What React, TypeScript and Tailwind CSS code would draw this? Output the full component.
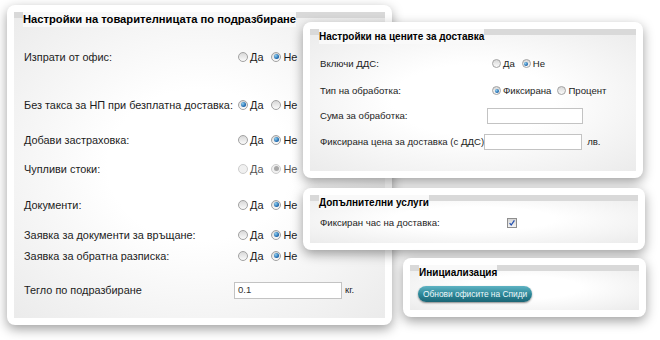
import type React from "react";

const FONT = "font-[family-name:'Liberation_Sans',Arial,sans-serif]";

type RadioProps = { checked?: boolean; disabled?: boolean; small?: boolean };

const Radio: React.FC<RadioProps> = ({ checked, disabled, small }) => (
  <span
    className={`inline-flex shrink-0 items-center justify-center rounded-full border ${
      small ? "h-[9px] w-[9px]" : "h-[10px] w-[10px]"
    } ${
      disabled
        ? "border-[#cdcdcd] bg-[#f0f0f0]"
        : "border-[#a2a2a2] bg-[linear-gradient(#d8d8d8,#fbfbfb)]"
    }`}
  >
    {checked && (
      <span
        className={`rounded-full ${small ? "h-[4px] w-[4px]" : "h-[5px] w-[5px]"} ${
          disabled
            ? "bg-[#a8a8a8]"
            : "bg-[radial-gradient(circle_at_35%_35%,#8fd0f0,#1660a8_70%)]"
        }`}
      />
    )}
  </span>
);

type ChoiceProps = { label: string; checked?: boolean; disabled?: boolean; small?: boolean };

const Choice: React.FC<ChoiceProps> = ({ label, checked, disabled, small }) => (
  <span className="inline-flex items-center gap-[2px]">
    <Radio checked={checked} disabled={disabled} small={small} />
    <span className={disabled ? "text-[#555]" : ""}>{label}</span>
  </span>
);

const Panel: React.FC<{ title: string; titleSize: string; className: string; children: React.ReactNode }> = ({
  title,
  titleSize,
  className,
  children,
}) => (
  <div className={`absolute rounded-[8px] bg-white p-[7px] shadow-[0_4px_12px_rgba(0,0,0,0.38)] ${className}`}>
    <div className="h-full bg-[radial-gradient(ellipse_at_center,#ffffff_35%,#ebebeb_100%)]">
      <div className="flex h-[15px] border-t-[6px] border-[#d9d9d9] pl-[9px]">
        <span
          className={`-mt-[6px] inline-block h-[15px] bg-[#f9f9f9] font-bold leading-[15px] text-black ${titleSize}`}
        >
          {title}
        </span>
      </div>
      {children}
    </div>
  </div>
);

const LeftRow: React.FC<{ label: string; className: string; children: React.ReactNode }> = ({
  label,
  className,
  children,
}) => (
  <div className={`flex h-[20px] items-center pl-[10px] ${className}`}>
    <span className="w-[210px] shrink-0">{label}</span>
    {children}
  </div>
);

const YesNo: React.FC<{ yes?: boolean; disabled?: boolean }> = ({ yes, disabled }) => (
  <div className="flex items-center gap-[8px] pl-[4px]">
    <Choice label="Да" checked={yes} disabled={disabled} />
    <Choice label="Не" checked={!yes} disabled={disabled} />
  </div>
);

const RightRow: React.FC<{ label: string; className: string; children: React.ReactNode }> = ({
  label,
  className,
  children,
}) => (
  <div className={`flex h-[20px] items-center pl-[10px] ${className}`}>
    <span className="w-[164px] shrink-0 whitespace-nowrap">{label}</span>
    {children}
  </div>
);

export default function App() {
  return (
    <div className={`relative h-[340px] w-[660px] overflow-hidden bg-white text-[#1c1c1c] ${FONT}`}>
      <Panel
        title="Настройки на товарителницата по подразбиране"
        titleSize="text-[11.2px]"
        className="left-[7px] top-[5px] h-[320px] w-[385px] text-[10.9px]"
      >
        <LeftRow label="Изпрати от офис:" className="mt-[20px]">
          <YesNo />
        </LeftRow>
        <LeftRow label="Без такса за НП при безплатна доставка:" className="mt-[28px]">
          <YesNo yes />
        </LeftRow>
        <LeftRow label="Добави застраховка:" className="mt-[15px]">
          <YesNo />
        </LeftRow>
        <LeftRow label="Чупливи стоки:" className="mt-[9px]">
          <YesNo disabled />
        </LeftRow>
        <LeftRow label="Документи:" className="mt-[16px]">
          <YesNo />
        </LeftRow>
        <LeftRow label="Заявка за документи за връщане:" className="mt-[10px]">
          <YesNo />
        </LeftRow>
        <LeftRow label="Заявка за обратна разписка:" className="mt-[1px]">
          <YesNo />
        </LeftRow>
        <LeftRow label="Тегло по подразбиране" className="mt-[14px]">
          <div className="flex h-[17px] w-[108px] items-center border border-[#c3c3c3] bg-white px-[3px] text-[9.5px] text-[#333]">
            0.1
          </div>
          <span className="ml-[3px] text-[9.5px]">кг.</span>
        </LeftRow>
      </Panel>

      <Panel
        title="Настройки на цените за доставка"
        titleSize="text-[10px]"
        className="left-[303px] top-[22px] h-[156px] w-[340px] text-[9.6px]"
      >
        <RightRow label="Включи ДДС:" className="mt-[10px]">
          <div className="flex items-center gap-[7px] pl-[8px]">
            <Choice small label="Да" />
            <Choice small checked label="Не" />
          </div>
        </RightRow>
        <RightRow label="Тип на обработка:" className="mt-[7px]">
          <div className="flex items-center gap-[6px] pl-[8px]">
            <Choice small checked label="Фиксирана" />
            <Choice small label="Процент" />
          </div>
        </RightRow>
        <RightRow label="Сума за обработка:" className="mt-[5px]">
          <div className="ml-[3px] h-[16px] w-[96px] border border-[#c3c3c3] bg-white" />
        </RightRow>
        <div className="mt-[6px] flex h-[20px] items-center pl-[10px]">
          <span className="whitespace-nowrap">Фиксирана цена за доставка (с ДДС)</span>
          <div className="h-[16px] w-[98px] shrink-0 border border-[#c3c3c3] bg-white" />
          <span className="ml-[5px]">лв.</span>
        </div>
      </Panel>

      <Panel
        title="Допълнителни услуги"
        titleSize="text-[10px]"
        className="left-[303px] top-[188px] h-[62px] w-[342px] text-[9.6px]"
      >
        <div className="mt-[3px] flex h-[20px] items-center pl-[10px]">
          <span className="w-[187px] shrink-0">Фиксиран час на доставка:</span>
          <span className="flex h-[10px] w-[10px] items-center justify-center border border-[#8e8e8e] bg-[linear-gradient(#d4d4d4,#f4f4f4)]">
            <svg viewBox="0 0 10 10" className="h-[8px] w-[8px]">
              <path d="M2 5.2 L4 7.5 L8 1.8" fill="none" stroke="#2450b0" strokeWidth="1.6" />
            </svg>
          </span>
        </div>
      </Panel>

      <Panel
        title="Инициализация"
        titleSize="text-[10px]"
        className="left-[403px] top-[258px] h-[59px] w-[243px] text-[10px]"
      >
        <div className="mt-[6px] pl-[8px]">
          <button
            type="button"
            className="h-[16px] rounded-full bg-[linear-gradient(#5fb3c3,#2a8596_55%,#1c6676)] px-[5px] text-[8.4px] leading-[16px] text-[#eef8fa] shadow-[0_1px_2px_rgba(0,0,0,0.45)]"
          >
            Обнови офисите на Спиди
          </button>
        </div>
      </Panel>
    </div>
  );
}
